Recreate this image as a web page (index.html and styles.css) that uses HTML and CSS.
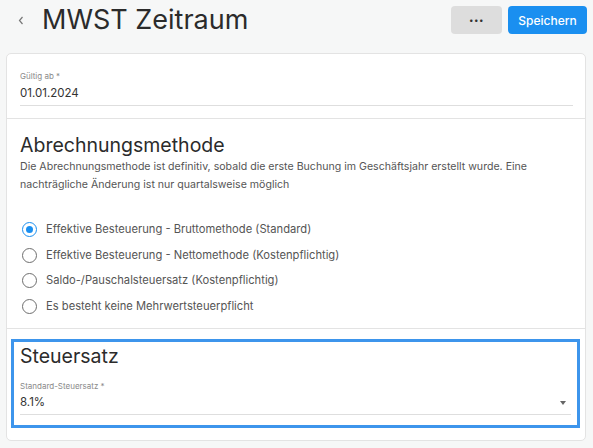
FILE: index.html
```html
<!DOCTYPE html>
<html lang="de">
<head>
<meta charset="utf-8">
<title>MWST Zeitraum</title>
<link rel="stylesheet" href="styles.css">
</head>
<body>
<header class="topbar">
  <div class="title-wrap">
    <svg class="back" width="6" height="9" viewBox="0 0 6 9"><path d="M4.5 1 L1.5 4.5 L4.5 8" fill="none" stroke="#777" stroke-width="1.2"/></svg>
    <h1 class="title">MWST Zeitraum</h1>
  </div>
  <div class="actions">
    <button class="btn btn-more">&bull;&bull;&bull;</button>
    <button class="btn btn-primary">Speichern</button>
  </div>
</header>
<main class="card">
  <section class="section section-date">
    <div class="field">
      <label class="field-label">Gültig ab *</label>
      <div class="field-value">01.01.2024</div>
    </div>
  </section>
  <section class="section section-method">
    <h2 class="section-title">Abrechnungsmethode</h2>
    <p class="desc">Die Abrechnungsmethode ist definitiv, sobald die erste Buchung im Geschäftsjahr erstellt wurde. Eine nachträgliche Änderung ist nur quartalsweise möglich</p>
    <ul class="radios">
      <li class="radio checked"><span class="dot"></span>Effektive Besteuerung - Bruttomethode (Standard)</li>
      <li class="radio"><span class="dot"></span>Effektive Besteuerung - Nettomethode (Kostenpflichtig)</li>
      <li class="radio"><span class="dot"></span>Saldo-/Pauschalsteuersatz (Kostenpflichtig)</li>
      <li class="radio"><span class="dot"></span>Es besteht keine Mehrwertsteuerpflicht</li>
    </ul>
  </section>
  <section class="section section-rate">
    <div class="focus-box">
      <h2 class="section-title">Steuersatz</h2>
      <div class="field">
        <label class="field-label">Standard-Steuersatz *</label>
        <div class="field-value select">8.1%<span class="caret"></span></div>
      </div>
    </div>
  </section>
</main>
</body>
</html>
```
FILE: styles.css
```css
* { box-sizing: border-box; }
html, body { margin: 0; padding: 0; }
body {
  background: #f6f7f7;
  font-family: Inter, "Noto Sans", sans-serif;
  color: #333;
  width: 593px;
  height: 448px;
  overflow: hidden;
}
.topbar {
  display: flex;
  justify-content: space-between;
  align-items: center;
  padding: 6px 6px 0 18px;
  height: 34px;
}
.title-wrap { display: flex; align-items: center; gap: 18px; }
.back { display: block; margin-top: 1px; }
.title {
  margin: 0;
  font-size: 27px;
  font-weight: 400;
  color: #2b2b2b;
  line-height: 28px;
}
.actions { display: flex; gap: 6px; }
.btn {
  height: 28px;
  border: none;
  border-radius: 4px;
  font-family: Inter, sans-serif;
  font-size: 12px;
  padding: 0;
}
.btn-more {
  width: 51px;
  background: #dddddd;
  color: #333;
  font-size: 8px;
  letter-spacing: 0.5px;
}
.btn-primary {
  width: 79px;
  background: #1a8ff0;
  color: #fff;
  font-weight: 500;
}
.card {
  margin: 19px 7px 0 6px;
  background: #fff;
  border: 1px solid #e3e3e3;
  border-radius: 5px;
  height: 388px;
}
.section { border-bottom: 1px solid #e3e3e3; }
.section:last-child { border-bottom: none; }
.section-date { padding: 17px 12px 12px 13px; height: 65px; }
.field { display: flex; flex-direction: column; }
.field-label {
  font-size: 8px;
  color: #8a8a8a;
  line-height: 10px;
}
.field-value {
  font-size: 11.5px;
  color: #333;
  line-height: 14px;
  margin-top: 5px;
  padding-bottom: 5px;
  border-bottom: 1px solid #dedede;
}
.section-method { padding: 14px 13px 0 13px; height: 210px; }
.section-title {
  margin: 0;
  font-size: 19.5px;
  font-weight: 400;
  color: #2b2b2b;
  line-height: 24px;
}
.desc {
  margin: 1px 0 0;
  font-size: 10.6px;
  line-height: 18px;
  color: #555;
}
.radios { list-style: none; margin: 28px 0 0; padding: 0; display: flex; flex-direction: column; gap: 10.5px; }
.radio {
  display: flex;
  align-items: center;
  gap: 9px;
  font-size: 11.2px;
  color: #555;
  line-height: 15px;
  margin-left: 2px;
}
.dot {
  width: 15px;
  height: 15px;
  border-radius: 50%;
  border: 1.5px solid #6e6e6e;
  flex: none;
  position: relative;
}
.radio.checked .dot { border-color: #1a8ff0; }
.radio.checked .dot::after {
  content: "";
  position: absolute;
  left: 2.5px; top: 2.5px;
  width: 7px; height: 7px;
  border-radius: 50%;
  background: #1a8ff0;
}
.section-rate { padding: 10px 5px 0 4px; }
.focus-box {
  border: 3px solid #3d95ec;
  padding: 2px 6px 10px 6px;
  height: 89px;
}
.section-rate .field { margin-top: 13px; }
.section-rate .field-value { margin-top: 4px; }
.select { position: relative; }
.caret {
  position: absolute;
  right: 5px;
  top: 6px;
  width: 0; height: 0;
  border-left: 3.5px solid transparent;
  border-right: 3.5px solid transparent;
  border-top: 4px solid #666;
}
```
